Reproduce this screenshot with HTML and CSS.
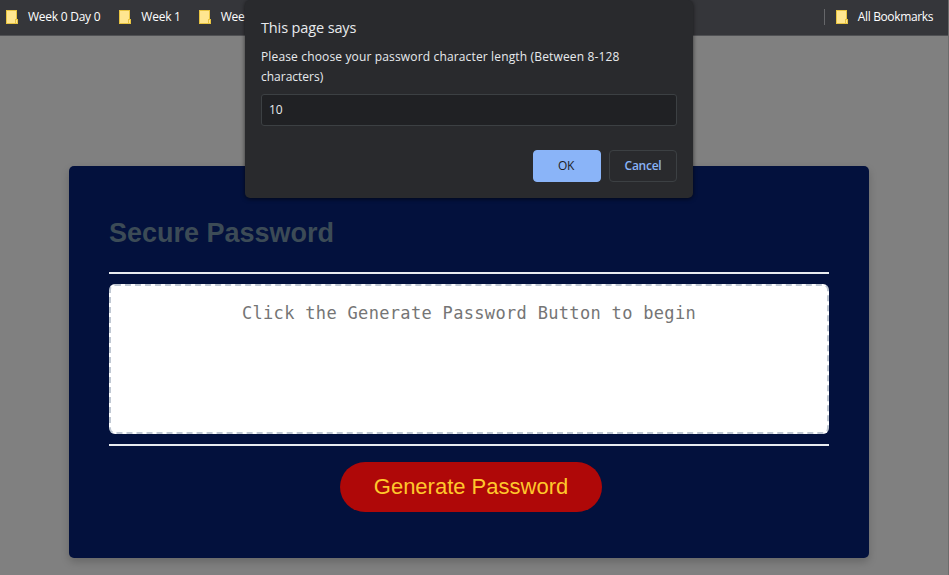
FILE: index.html
```html
<!DOCTYPE html>
<html lang="en">
<head>
<meta charset="utf-8">
<title>Password Generator</title>
<link rel="stylesheet" href="styles.css">
</head>
<body>
<svg class="defs" width="0" height="0" aria-hidden="true">
  <symbol id="folder" viewBox="0 0 12 14">
    <path d="M0 0h11v9h1v5H0z" fill="#e8c441"/>
    <path d="M1 1h9v8H9v4H1z" fill="#ffe690"/>
    <path d="M10 10h1v3h-1z" fill="#ffe690"/>
  </symbol>
</svg>
<nav class="bookmarks">
  <span class="bookmark day"><svg class="folder"><use href="#folder"/></svg><span>Week 0 Day 0</span></span>
  <span class="bookmark"><svg class="folder"><use href="#folder"/></svg><span>Week 1</span></span>
  <span class="bookmark"><svg class="folder"><use href="#folder"/></svg><span>Week 2</span></span>
  <span class="bookmark all"><svg class="folder"><use href="#folder"/></svg><span>All Bookmarks</span></span>
</nav>
<main class="page">
  <section class="card">
    <h2 class="title">Secure Password</h2>
    <div class="card-body">
      <textarea class="password" readonly placeholder="Click the Generate Password Button to begin"></textarea>
    </div>
    <div class="card-footer"><button class="generate">Generate Password</button></div>
  </section>
</main>
<div class="dialog" role="dialog">
  <h1 class="dialog-title"><span>This page says</span></h1>
  <p class="message">Please choose your password character length (Between 8-128<br><span class="second">characters)</span></p>
  <input class="length" value="10">
  <div class="actions">
    <button class="action ok">OK</button>
    <button class="action cancel">Cancel</button>
  </div>
</div>
</body>
</html>
```
FILE: styles.css
```css
* { box-sizing: border-box; }
html, body { height: 100%; }
body {
  margin: 0;
  display: flex;
  flex-direction: column;
  overflow: hidden;
  background: #808080;
  border-right: 1px solid #6c6c6c;
  font-family: "Liberation Sans", Arial, sans-serif;
}
.defs { position: absolute; }
.bookmarks {
  flex: none;
  display: flex;
  align-items: center;
  height: 36px;
  padding: 0 15px 2px 6px;
  gap: 18px;
  background: #35363a;
  border-bottom: 1px solid #505154;
  color: #fff;
  font: 12px/16px "Open Sans", sans-serif;
  letter-spacing: -0.25px;
  white-space: nowrap;
}
.bookmark { display: flex; align-items: center; gap: 10px; }
.day { margin-right: 1px; }
.folder { width: 12px; height: 14px; flex: none; }
.all {
  height: 16px;
  margin-left: auto;
  padding-left: 11px;
  border-left: 1px solid #66676a;
  letter-spacing: -.37px;
}
.page { flex: 1; padding: 130px 0 0 69px; }
.card {
  width: 800px;
  height: 392px;
  padding: 40px;
  border-radius: 5px;
  background: #03113d;
  box-shadow: 0 4px 8px rgba(0, 0, 0, .2);
}
.title {
  margin: 0;
  height: 66px;
  padding-top: 11px;
  color: #3c4b56;
  font-size: 27px;
  line-height: 32px;
}
.card-body {
  height: 174px;
  padding: 10px 0;
  border: solid #e9ecf0;
  border-width: 2px 0;
}
.password {
  display: block;
  width: 100%;
  height: 150px;
  padding: 15px 20px;
  border: 2px dashed #bfc7d2;
  border-radius: 6px;
  background: #fff;
  resize: none;
  text-align: center;
  overflow: hidden;
  font: 17px/24px "DejaVu Sans Mono", monospace;
  letter-spacing: .326px;
}
.password::placeholder { color: #757575; }
.card-footer { padding: 16px 0 0 231px; }
.generate {
  display: block;
  width: 262px;
  height: 50px;
  padding: 0;
  border: 0;
  border-radius: 25px;
  background: #af0808;
  color: #ffc72c;
  font: 22px/50px "Liberation Sans", Arial, sans-serif;
}
.dialog {
  position: absolute;
  top: 0;
  left: 245px;
  width: 448px;
  height: 198px;
  padding: 18px 16px;
  border-radius: 5px;
  background: #292a2d;
  box-shadow: 0 1px 4px rgba(0, 0, 0, .6);
  color: #e8eaed;
  font-family: "Open Sans", sans-serif;
}
.dialog-title { margin: 0 0 9px; font-size: 14.5px; font-weight: 400; line-height: 20px; letter-spacing: -.13px; }
.message { margin: 0 0 7px; font-size: 12px; line-height: 20px; letter-spacing: .15px; white-space: nowrap; }
.second { letter-spacing: 0; }
.length {
  display: block;
  width: 416px;
  height: 32px;
  padding: 0 7px 2px;
  border: 1px solid #3c4043;
  border-radius: 3px;
  background: #202124;
  color: #e8eaed;
  font: 12px "Open Sans", sans-serif;
  letter-spacing: -.2px;
}
.actions { display: flex; justify-content: flex-end; gap: 8px; margin-top: 24px; }
.action {
  width: 68px;
  height: 32px;
  padding: 0 0 1px;
  border: 1px solid #3c4043;
  border-radius: 4px;
  background: none;
  font: 600 12px "Open Sans", sans-serif;
  letter-spacing: -.25px;
}
.ok { padding-right: 2px; background: #8ab4f8; border-color: #8ab4f8; color: #202124; font-weight: 500; }
.cancel { color: #8ab4f8; }
```
